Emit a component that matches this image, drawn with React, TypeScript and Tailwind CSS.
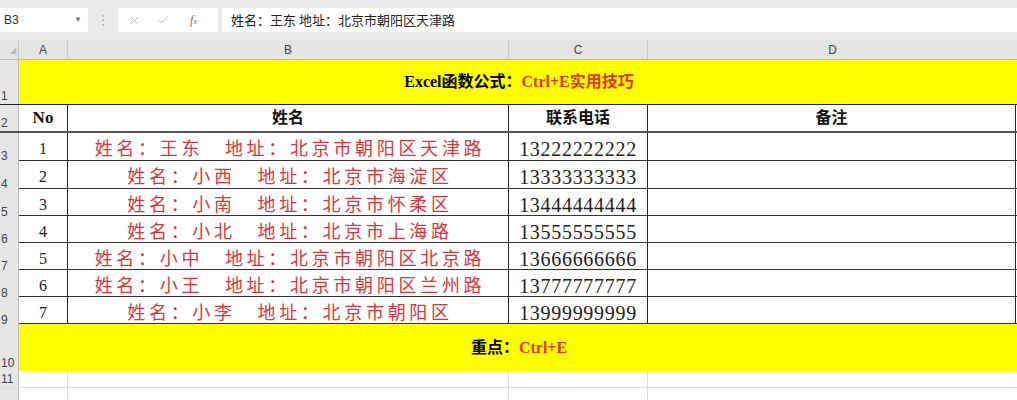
import { X, Check } from "lucide-react";

const cols = "grid grid-cols-[19px_49px_441px_139px_1fr]";
const serif = "font-['Liberation_Serif','Noto_Sans_CJK_SC',serif]";
const cjk = "font-['Noto_Sans_CJK_SC','Liberation_Sans',sans-serif]";

const rows = [
  { no: 1, name: "王东", addr: "北京市朝阳区天津路", tel: "13222222222" },
  { no: 2, name: "小西", addr: "北京市海淀区", tel: "13333333333" },
  { no: 3, name: "小南", addr: "北京市怀柔区", tel: "13444444444" },
  { no: 4, name: "小北", addr: "北京市上海路", tel: "13555555555" },
  { no: 5, name: "小中", addr: "北京市朝阳区北京路", tel: "13666666666" },
  { no: 6, name: "小王", addr: "北京市朝阳区兰州路", tel: "13777777777" },
  { no: 7, name: "小李", addr: "北京市朝阳区", tel: "13999999999" },
];

const heights = ["h-[28px]", "h-[28px]", "h-[27px]", "h-[27px]", "h-[27px]", "h-[27px]", "h-[27px]"];

function RowHead({ n }: { n: number | string }) {
  return (
    <div className="flex items-end justify-start border-r border-[#bdbdbd] bg-[#e6e6e6] pl-[1px] text-[12px] leading-[15px] text-[#444] font-['Liberation_Sans',sans-serif]">
      {n}
    </div>
  );
}

function FormulaBar() {
  return (
    <div className="flex h-[40px] items-start bg-[#ebebeb] pt-[8px]">
      <div className="flex h-[24px] w-[88px] items-center justify-between bg-white pl-[4px] pr-[6px] text-[12px] text-[#333] font-['Liberation_Sans',sans-serif]">
        <span>B3</span>
        <span className="text-[8px] text-[#777]">▼</span>
      </div>
      <div className="flex h-[24px] w-[30px] items-center justify-center">
        <span className="text-[12px] leading-none text-[#aaa]">⋮</span>
      </div>
      <div className="flex h-[24px] w-[100px] items-center bg-white pl-[10px] text-[#b5b5b5]">
        <X className="h-[13px] w-[13px]" strokeWidth={1.5} />
        <Check className="ml-[15px] h-[14px] w-[14px]" strokeWidth={1.5} />
        <span className="ml-[20px] text-[12px] italic text-[#777] font-['Liberation_Serif',serif]">
          f<span className="text-[9px]">x</span>
        </span>
      </div>
      <div className={`ml-[4px] flex h-[24px] flex-1 items-center bg-white pl-[9px] text-[13px] text-[#222] ${cjk}`}>
        姓名：王东 地址：北京市朝阳区天津路
      </div>
    </div>
  );
}

export default function App() {
  return (
    <div className="h-[400px] w-[1017px] overflow-hidden bg-white">
      <FormulaBar />

      {/* column headers */}
      <div className={`${cols} h-[20px] border-b border-[#bdbdbd] bg-[#e4e4e4] text-[12px] text-[#444] font-['Liberation_Sans',sans-serif]`}>
        <div className="flex items-end justify-end border-r border-[#c8c8c8] pb-[2px] pr-[2px] text-[8px] text-[#bbb]">◢</div>
        <div className="flex items-center justify-center border-r border-[#c8c8c8]">A</div>
        <div className="flex items-center justify-center border-r border-[#c8c8c8]">B</div>
        <div className="flex items-center justify-center border-r border-[#c8c8c8]">C</div>
        <div className="flex items-center justify-center">D</div>
      </div>

      {/* row 1 title */}
      <div className={`${cols} h-[44px]`}>
        <RowHead n={1} />
        <div className={`col-span-4 flex items-center justify-center bg-[#ffff00] pl-[2px] text-[16px] font-bold ${serif}`}>
          <span className="text-black">Excel函数公式：</span>
          <span className="text-[#e8321c]">Ctrl+E实用技巧</span>
        </div>
      </div>

      {/* table */}
      <div className="border-t border-[#222]">
        <div className={`${cols} h-[28px] border-b-2 border-[#555]`}>
          <RowHead n={2} />
          <div className={`flex items-center justify-center border-r border-[#222] text-[17px] font-bold text-[#111] ${serif}`}>No</div>
          <div className={`flex items-center justify-center border-r border-[#222] text-[16px] font-bold text-[#111] ${serif}`}>姓名</div>
          <div className={`flex items-center justify-center border-r border-[#222] text-[16px] font-bold text-[#111] ${serif}`}>联系电话</div>
          <div className={`mr-[1px] flex items-center justify-center border-r border-[#222] text-[16px] font-bold text-[#111] ${serif}`}>备注</div>
        </div>
        {rows.map((r, i) => (
          <div key={r.no} className={`${cols} ${heights[i]} border-b border-[#333]`}>
            <RowHead n={r.no + 2} />
            <div className={`flex items-center justify-center border-r border-[#222] text-[16px] text-[#222] ${serif}`}>{r.no}</div>
            <div className={`flex items-center justify-center overflow-hidden border-r border-[#222] pb-[4px] pl-[4px] text-[18px] leading-[20px] tracking-[3.7px] text-[#d8363c] ${cjk}`}>
              姓名：{r.name}　地址：{r.addr}
            </div>
            <div className={`flex items-center justify-center border-r border-[#222] pt-[1px] text-[20px] tracking-[0.7px] text-[#222] ${serif}`}>{r.tel}</div>
            <div className="mr-[1px] border-r border-[#222]" />
          </div>
        ))}
      </div>

      {/* row 10 */}
      <div className={`${cols} h-[47px]`}>
        <RowHead n={10} />
        <div className={`col-span-4 flex items-center justify-center bg-[#ffff00] pl-[2px] text-[16px] font-bold ${serif}`}>
          <span className="text-black">重点：</span>
          <span className="text-[#e8321c]">Ctrl+E</span>
        </div>
      </div>

      {/* empty rows */}
      {[11, 12].map((n) => (
        <div key={n} className={`${cols} h-[17px] border-b border-[#dcdcdc]`}>
          <RowHead n={n === 12 ? "" : n} />
          <div className="border-r border-[#dcdcdc]" />
          <div className="border-r border-[#dcdcdc]" />
          <div className="border-r border-[#dcdcdc]" />
          <div />
        </div>
      ))}
    </div>
  );
}
